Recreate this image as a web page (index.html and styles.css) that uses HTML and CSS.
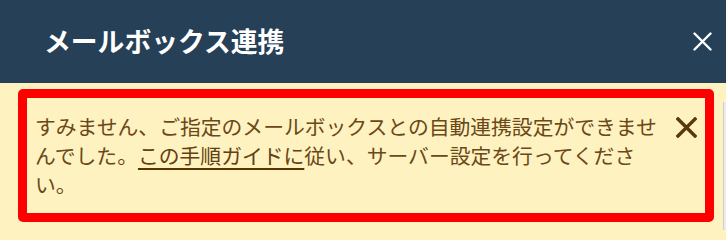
FILE: index.html
```html
<!DOCTYPE html>
<html lang="ja">
<head>
<meta charset="utf-8">
<title>メールボックス連携</title>
<link rel="stylesheet" href="styles.css">
</head>
<body>
<header class="header">
  <h1 class="title">メールボックス連携</h1>
  <button class="close" aria-label="閉じる">
    <svg width="19" height="19" viewBox="0 0 19 19"><path d="M1.5 1.5 L17.5 17.5 M17.5 1.5 L1.5 17.5" stroke="#fff" stroke-width="2.4" stroke-linecap="round" fill="none"/></svg>
  </button>
</header>
<main class="content">
  <div class="alert">
    <p class="alert-text">すみません、ご指定のメールボックスとの自動連携設定ができませんでした。<a class="link" href="#">この手順ガイドに</a>従い、サーバー設定を行ってください。</p>
    <button class="alert-close" aria-label="閉じる">
      <svg width="21" height="21" viewBox="0 0 21 21"><path d="M2 2 L19 19 M19 2 L2 19" stroke="#5a3a0c" stroke-width="3.4" stroke-linecap="square" fill="none"/></svg>
    </button>
  </div>
  <div class="scroll-strip"></div>
</main>
</body>
</html>
```
FILE: styles.css
```css
html, body {
  margin: 0;
  padding: 0;
  height: 100%;
}
body {
  font-family: "Noto Sans CJK JP", "Noto Sans", sans-serif;
  background: #fff2c1;
  overflow: hidden;
}
.header {
  height: 83px;
  background: #264058;
  display: flex;
  align-items: center;
  justify-content: space-between;
  padding: 0 14px 0 44px;
  box-sizing: border-box;
}
.title {
  margin: 0;
  color: #fff;
  font-size: 26.8px;
  font-weight: 700;
  line-height: 1;
  position: relative;
  top: 0px;
}
.close {
  background: none;
  border: 0;
  padding: 0;
  width: 19px;
  height: 19px;
  display: flex;
  margin-top: -1px;
}
.content {
  display: flex;
  align-items: flex-start;
}
.alert {
  flex: 1;
  margin: 6px 9px 8px 18px;
  border: 9px solid #ff0000;
  border-radius: 5px;
  padding: 14px 8px 14px 8px;
  display: flex;
  align-items: flex-start;
  gap: 10px;
}
.alert-text {
  flex: 1;
  margin: 0;
  color: #6b4818;
  font-size: 20.8px;
  line-height: 29px;
}
.link {
  color: #62400f;
  text-decoration: underline;
  text-decoration-thickness: 2px;
  text-underline-offset: 4px;
  text-decoration-color: #5a3500;
}
.alert-close {
  background: none;
  border: 0;
  padding: 0;
  width: 21px;
  height: 29px;
  display: flex;
  align-items: center;
  justify-content: center;
  margin-top: 1px;
}
.scroll-strip {
  width: 3px;
  align-self: stretch;
  margin-top: 19px;
  background: linear-gradient(to right, #cfcfcf 0, #cfcfcf 1.5px, #ececec 1.5px);
}
```
